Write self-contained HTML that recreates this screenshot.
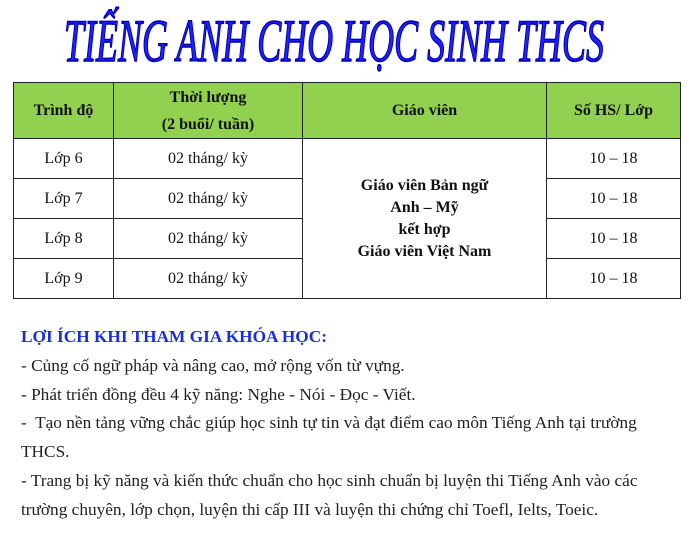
<!DOCTYPE html>
<html><head><meta charset="utf-8"><style>
body{margin:0;width:689px;height:537px;background:#fff;font-family:"Liberation Serif",serif;position:relative;overflow:hidden}
.t{position:absolute;left:64px;top:4px;width:542px;height:66px;overflow:visible}
table{position:absolute;left:13px;top:82px;border-collapse:collapse;table-layout:fixed;width:667px;font-size:16px;color:#111}
td{border:1px solid #222;text-align:center;padding:0}
th{border:1px solid #222;background:#92d050;font-weight:bold;font-size:16px;height:55px;line-height:27px;padding:0}
.r td{height:39px}
.g{font-weight:bold;line-height:22px}
.txt{position:absolute;left:21px;top:323px;font-size:17.3px;line-height:28.8px;color:#222;white-space:nowrap}
.h{color:#1a2ee0;font-weight:bold}
</style></head><body>
<svg class="t" viewBox="0 0 542 66"><text x="0" y="57" textLength="540" lengthAdjust="spacingAndGlyphs" font-family="Liberation Serif" font-style="italic" font-size="60" fill="#2020ff" stroke="#0000b0" stroke-width="1.5">TIẾNG ANH CHO HỌC SINH THCS</text></svg>
<table>
<colgroup><col style="width:100px"><col style="width:189px"><col style="width:244px"><col style="width:134px"></colgroup>
<tr><th>Trình độ</th><th>Thời lượng<br>(2 buổi/ tuần)</th><th>Giáo viên</th><th>Số HS/ Lớp</th></tr>
<tr class="r"><td>Lớp 6</td><td>02 tháng/ kỳ</td><td rowspan="4" class="g">Giáo viên Bản ngữ<br>Anh – Mỹ<br>kết hợp<br>Giáo viên Việt Nam</td><td>10 – 18</td></tr>
<tr class="r"><td>Lớp 7</td><td>02 tháng/ kỳ</td><td>10 – 18</td></tr>
<tr class="r"><td>Lớp 8</td><td>02 tháng/ kỳ</td><td>10 – 18</td></tr>
<tr class="r"><td>Lớp 9</td><td>02 tháng/ kỳ</td><td>10 – 18</td></tr>
</table>
<div class="txt">
<div class="h">LỢI ÍCH KHI THAM GIA KHÓA HỌC:</div>
<div>- Củng cố ngữ pháp và nâng cao, mở rộng vốn từ vựng.</div>
<div>- Phát triển đồng đều 4 kỹ năng: Nghe - Nói - Đọc - Viết.</div>
<div>-&nbsp; Tạo nền tảng vững chắc giúp học sinh tự tin và đạt điểm cao môn Tiếng Anh tại trường</div>
<div>THCS.</div>
<div>- Trang bị kỹ năng và kiến thức chuẩn cho học sinh chuẩn bị luyện thi Tiếng Anh vào các</div>
<div>trường chuyên, lớp chọn, luyện thi cấp III và luyện thi chứng chỉ Toefl, Ielts, Toeic.</div>
</div>
</body></html>
